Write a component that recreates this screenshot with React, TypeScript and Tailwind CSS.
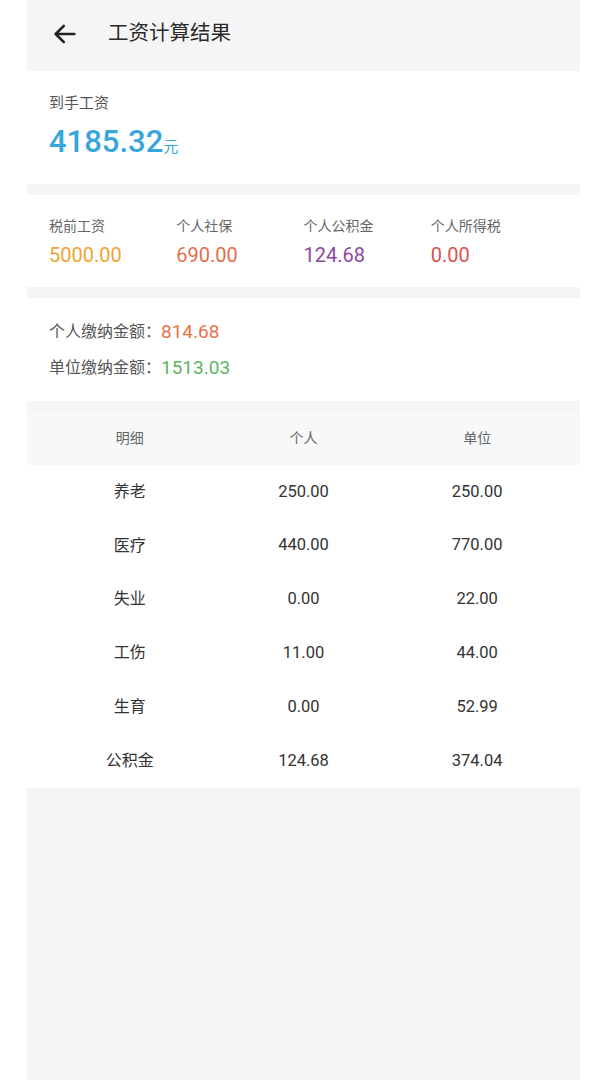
import React from "react";

const rows = [
  ["养老", "250.00", "250.00"],
  ["医疗", "440.00", "770.00"],
  ["失业", "0.00", "22.00"],
  ["工伤", "11.00", "44.00"],
  ["生育", "0.00", "52.99"],
  ["公积金", "124.68", "374.04"],
];

const stats = [
  { label: "税前工资", value: "5000.00", color: "text-[#f0a431]" },
  { label: "个人社保", value: "690.00", color: "text-[#e2704c]" },
  { label: "个人公积金", value: "124.68", color: "text-[#8e4a9a]" },
  { label: "个人所得税", value: "0.00", color: "text-[#d9534f]" },
];

export default function App() {
  return (
    <div
      className="w-[607px] h-[1080px] bg-white flex justify-center"
      style={{ fontFamily: 'Roboto, "Noto Sans CJK SC", sans-serif' }}
    >
      <div className="w-[553px] h-full bg-[#f5f5f5] flex flex-col">
        {/* header */}
        <div className="h-[71px] flex items-center pl-[24px] pb-[4px]">
          <svg width="28" height="28" viewBox="0 0 24 24" fill="none" stroke="#222" strokeWidth="2.2" strokeLinecap="round" strokeLinejoin="round">
            <path d="M20 12H4.5" />
            <path d="M11 5l-7 7 7 7" />
          </svg>
          <span className="ml-[29px] text-[20.5px] text-[#2a2a2a] leading-none">工资计算结果</span>
        </div>

        {/* net salary */}
        <div className="h-[113px] bg-white px-[22px] pt-[22px]">
          <div className="text-[15px] text-[#555] leading-[20px]">到手工资</div>
          <div className="mt-[9px] flex items-end text-[#36a6dc]">
            <span className="text-[31px] leading-[40px] font-medium">4185.32</span>
            <span className="text-[15px] leading-[20px] mb-[5px]">元</span>
          </div>
        </div>

        <div className="h-[11px]" />

        {/* stats */}
        <div className="h-[92px] bg-white px-[22px] pt-[21px] grid grid-cols-4">
          {stats.map((s) => (
            <div key={s.label}>
              <div className="text-[14px] text-[#666] leading-[20px]">{s.label}</div>
              <div className={`mt-[7px] text-[20px] leading-[24px] ${s.color}`}>{s.value}</div>
            </div>
          ))}
        </div>

        <div className="h-[11px]" />

        {/* totals */}
        <div className="h-[103px] bg-white px-[22px] pt-[22px] flex flex-col gap-[12px]">
          <div className="flex items-center leading-[24px]">
            <span className="text-[16px] text-[#555]">个人缴纳金额：</span>
            <span className="text-[19px] text-[#e8734a]">814.68</span>
          </div>
          <div className="flex items-center leading-[24px]">
            <span className="text-[16px] text-[#555]">单位缴纳金额：</span>
            <span className="text-[19px] text-[#5cb563]">1513.03</span>
          </div>
        </div>

        <div className="h-[11px]" />

        {/* table */}
        <div className="bg-white">
          <div className="h-[53px] bg-[#f7f8fa] px-[16px] grid grid-cols-3 items-center text-[14px] text-[#666] text-center">
            <span>明细</span>
            <span>个人</span>
            <span>单位</span>
          </div>
          {rows.map((r) => (
            <div
              key={r[0]}
              className="h-[53.8px] px-[16px] grid grid-cols-3 items-center text-[16px] text-[#333] text-center"
            >
              <span>{r[0]}</span>
              <span className="text-[16.5px]">{r[1]}</span>
              <span className="text-[16.5px]">{r[2]}</span>
            </div>
          ))}
        </div>
      </div>
    </div>
  );
}
